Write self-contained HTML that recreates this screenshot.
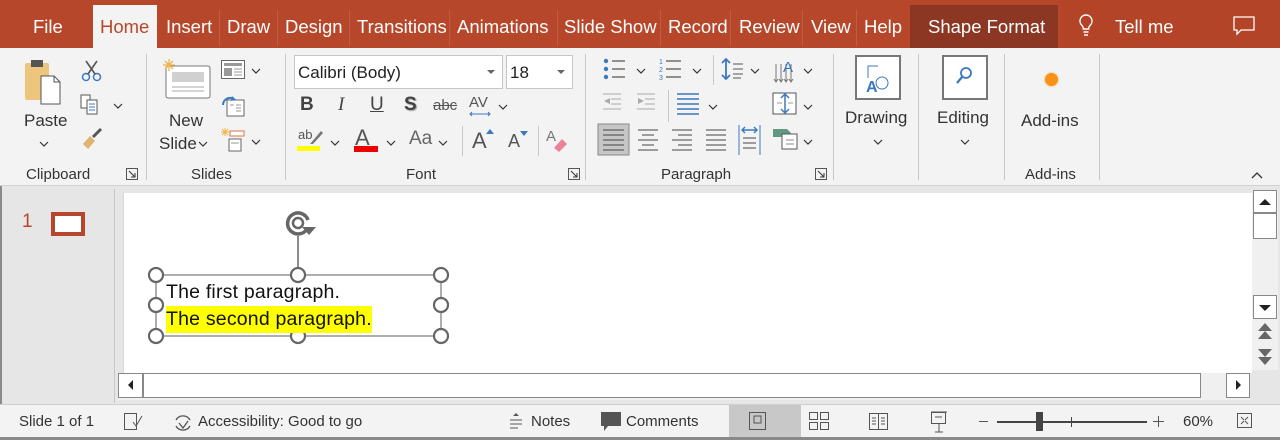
<!DOCTYPE html>
<html><head><meta charset="utf-8"><style>
*{margin:0;padding:0;box-sizing:border-box}
body{width:1280px;height:440px;overflow:hidden;font-family:"Liberation Sans",sans-serif;background:#e6e6e6;position:relative;color:#262626}
.a{position:absolute}
.tab{position:absolute;top:16px;color:#fff;font-size:18.5px;white-space:nowrap}
.sep{position:absolute;top:10px;width:1px;height:36px;background:rgba(255,255,255,.12)}
.lbl{position:absolute;font-size:15px;color:#333;white-space:nowrap}
.st{position:absolute;top:413px;font-size:15px;color:#333;white-space:nowrap}
.vs{position:absolute;width:1px;background:#c8c8c8}
svg{position:absolute;overflow:visible}
</style></head><body>
<!-- title/tab bar -->
<div class="a" style="left:0;top:0;width:1280px;height:48px;background:#b7472a"></div>
<div class="a" style="left:1060px;top:0;width:220px;height:48px;background:#b04228;opacity:.6"></div>
<div class="a" style="left:910px;top:5px;width:148px;height:43px;background:#8c3723"></div>
<div class="a" style="left:93px;top:5px;width:64px;height:43px;background:#f3f3f3"></div>
<div class="tab" style="left:33px">File</div>
<div class="tab" style="left:100px;color:#b7472a">Home</div>
<div class="tab" style="left:166px">Insert</div>
<div class="tab" style="left:227px">Draw</div>
<div class="tab" style="left:285px">Design</div>
<div class="tab" style="left:357px">Transitions</div>
<div class="tab" style="left:457px">Animations</div>
<div class="tab" style="left:564px">Slide Show</div>
<div class="tab" style="left:668px">Record</div>
<div class="tab" style="left:739px">Review</div>
<div class="tab" style="left:811px">View</div>
<div class="tab" style="left:864px">Help</div>
<div class="tab" style="left:928px">Shape Format</div>
<div class="tab" style="left:1115px">Tell me</div>
<div class="sep" style="left:219px"></div><div class="sep" style="left:277px"></div><div class="sep" style="left:349px"></div><div class="sep" style="left:449px"></div><div class="sep" style="left:557px"></div><div class="sep" style="left:660px"></div><div class="sep" style="left:730px"></div><div class="sep" style="left:802px"></div><div class="sep" style="left:856px"></div>
<svg style="left:1078px;top:14px" width="16" height="24"><path d="M8 1a6 6 0 0 0-4 10.5c1 1 1.3 2 1.3 3.5h5.4c0-1.5.3-2.5 1.3-3.5A6 6 0 0 0 8 1zM5.5 18h5M6 21h4" fill="none" stroke="#fff" stroke-width="1.4"/></svg>
<svg style="left:1233px;top:16px" width="22" height="20"><path d="M1 1h20v13H8l-4 4v-4H1z" fill="none" stroke="#fff" stroke-width="1.3"/></svg>

<!-- ribbon -->
<div class="a" style="left:0;top:48px;width:1280px;height:138px;background:#f3f3f3;border-bottom:1px solid #d2d2d2"></div>
<!-- clipboard -->
<svg style="left:23px;top:58px" width="48" height="48"><rect x="2" y="5" width="24" height="37" rx="2" fill="#edc57c"/><rect x="8" y="2" width="12" height="7" fill="#555"/><path d="M18 18h13l6 6v22H18z" fill="#fff" stroke="#555"/><path d="M31 18v6h6" fill="none" stroke="#555"/></svg>
<div class="lbl" style="left:24px;top:111px;font-size:17px">Paste</div>
<svg style="left:39px;top:141px" width="10" height="6"><path d="M1 1l4 4 4-4" fill="none" stroke="#333" stroke-width="1.2"/></svg>
<svg style="left:80px;top:59px" width="24" height="24"><circle cx="6" cy="18" r="3.5" fill="none" stroke="#3b78c0" stroke-width="1.5"/><circle cx="17" cy="18" r="3.5" fill="none" stroke="#3b78c0" stroke-width="1.5"/><path d="M8 15L17 2M15 15L6 2" stroke="#555" stroke-width="1.6"/></svg>
<svg style="left:80px;top:94px" width="24" height="22"><path d="M1 1h9v13H1z" fill="#fff" stroke="#555"/><path d="M7 6h10v14H7z" fill="#fff" stroke="#555"/><path d="M9 10h6M9 13h6M9 16h6" stroke="#3b78c0"/></svg>
<svg style="left:113px;top:103px" width="10" height="6"><path d="M1 1l4 4 4-4" fill="none" stroke="#333" stroke-width="1.2"/></svg>
<svg style="left:81px;top:128px" width="22" height="22"><path d="M12 9l8-8" stroke="#555" stroke-width="3"/><path d="M2 16l7-8 5 5-7 8z" fill="#e0b46c"/></svg>
<div class="lbl" style="left:26px;top:166px">Clipboard</div>
<svg style="left:126px;top:168px" width="12" height="12"><rect x=".5" y=".5" width="11" height="11" fill="none" stroke="#555"/><path d="M3 3l6 6M5 9h4V5" fill="none" stroke="#333"/></svg>
<div class="vs" style="left:146px;top:54px;height:126px"></div>
<!-- slides -->
<svg style="left:162px;top:58px" width="50" height="42"><rect x="4" y="8" width="44" height="32" rx="2" fill="#fff" stroke="#777"/><rect x="10" y="14" width="32" height="10" fill="#d0d0d0"/><path d="M10 29h32M10 33h32" stroke="#aaa"/><path d="M7 1v12M1 7h12M3 3l8 8M11 3l-8 8" stroke="#f0b44a" stroke-width="1.3"/></svg>
<div class="lbl" style="left:169px;top:111px;font-size:17px">New</div>
<div class="lbl" style="left:159px;top:134px;font-size:17px">Slide</div>
<svg style="left:198px;top:141px" width="10" height="6"><path d="M1 1l4 4 4-4" fill="none" stroke="#333" stroke-width="1.2"/></svg>
<svg style="left:221px;top:60px" width="24" height="20"><rect x=".5" y=".5" width="23" height="18" fill="#fff" stroke="#666"/><rect x="3" y="3" width="18" height="3" fill="#999"/><rect x="3" y="8" width="8" height="8" fill="#999"/><path d="M13 9h8M13 12h8M13 15h8" stroke="#999"/></svg>
<svg style="left:251px;top:68px" width="10" height="6"><path d="M1 1l4 4 4-4" fill="none" stroke="#333" stroke-width="1.2"/></svg>
<svg style="left:221px;top:95px" width="24" height="22"><rect x="6" y="5" width="17" height="16" fill="#fff" stroke="#666"/><path d="M9 10h4M15 10h5M15 13h5M15 16h5" stroke="#999"/><path d="M2 10a7 7 0 0 1 12-5" fill="none" stroke="#3b78c0" stroke-width="2"/><path d="M11 1l4 4-5 1z" fill="#3b78c0"/></svg>
<svg style="left:221px;top:127px" width="24" height="26"><path d="M4 1v8M0 5h8M1 2l6 6M7 2L1 8" stroke="#f0b44a"/><rect x="9" y="4" width="14" height="5" fill="#fff" stroke="#e07040"/><rect x="8" y="12" width="12" height="12" fill="#fff" stroke="#666"/><path d="M10 16h8" stroke="#999"/></svg>
<svg style="left:251px;top:139px" width="10" height="6"><path d="M1 1l4 4 4-4" fill="none" stroke="#333" stroke-width="1.2"/></svg>
<div class="lbl" style="left:191px;top:166px">Slides</div>
<div class="vs" style="left:285px;top:54px;height:126px"></div>
<!-- font -->
<div class="a" style="left:294px;top:55px;width:209px;height:34px;background:#fff;border:1px solid #c6c6c6;font-size:17px;padding:7px 3px;color:#222">Calibri (Body)</div>
<svg style="left:487px;top:70px" width="8" height="4"><path d="M0 0h8L4 4z" fill="#666"/></svg>
<div class="a" style="left:506px;top:55px;width:67px;height:34px;background:#fff;border:1px solid #c6c6c6;font-size:17px;padding:7px 3px;color:#222">18</div>
<svg style="left:557px;top:70px" width="8" height="4"><path d="M0 0h8L4 4z" fill="#666"/></svg>
<div class="a" style="left:300px;top:94px;font-size:19px;font-weight:bold;color:#444">B</div>
<div class="a" style="left:338px;top:94px;font-size:19px;font-style:italic;font-family:'Liberation Serif',serif;color:#444">I</div>
<div class="a" style="left:370px;top:94px;font-size:19px;text-decoration:underline;color:#444">U</div>
<div class="a" style="left:404px;top:94px;font-size:19px;font-weight:bold;color:#444;text-shadow:1px 1px 1px #999">S</div>
<div class="a" style="left:433px;top:97px;font-size:15px;color:#555;text-decoration:line-through">abc</div>
<div class="a" style="left:469px;top:94px;font-size:15px;color:#555">AV</div>
<svg style="left:469px;top:111px" width="24" height="6"><path d="M1 3h20M3 1L1 3l2 2M19 1l2 2-2 2" fill="none" stroke="#3b78c0"/></svg>
<svg style="left:498px;top:104px" width="10" height="6"><path d="M1 1l4 4 4-4" fill="none" stroke="#333" stroke-width="1.2"/></svg>
<div class="a" style="left:298px;top:127px;font-size:13px;color:#555">ab</div>
<svg style="left:306px;top:128px" width="18" height="18"><path d="M4 16L15 3l2 2L7 16z" fill="#777"/></svg>
<div class="a" style="left:297px;top:146px;width:23px;height:5px;background:#ffff00"></div>
<svg style="left:330px;top:140px" width="10" height="6"><path d="M1 1l4 4 4-4" fill="none" stroke="#333" stroke-width="1.2"/></svg>
<div class="a" style="left:355px;top:125px;font-size:22px;color:#555">A</div>
<div class="a" style="left:354px;top:146px;width:24px;height:6px;background:#ee0000"></div>
<svg style="left:386px;top:140px" width="10" height="6"><path d="M1 1l4 4 4-4" fill="none" stroke="#333" stroke-width="1.2"/></svg>
<div class="a" style="left:409px;top:128px;font-size:19px;color:#666">Aa</div>
<svg style="left:438px;top:140px" width="10" height="6"><path d="M1 1l4 4 4-4" fill="none" stroke="#333" stroke-width="1.2"/></svg>
<div class="vs" style="left:462px;top:126px;height:30px"></div>
<div class="a" style="left:472px;top:128px;font-size:22px;color:#555">A</div>
<svg style="left:486px;top:129px" width="8" height="5"><path d="M0 5L4 0l4 5z" fill="#3b78c0"/></svg>
<div class="a" style="left:508px;top:131px;font-size:18px;color:#555">A</div>
<svg style="left:520px;top:131px" width="8" height="5"><path d="M0 0h8L4 5z" fill="#3b78c0"/></svg>
<div class="vs" style="left:538px;top:126px;height:30px"></div>
<div class="a" style="left:546px;top:128px;font-size:15px;color:#777">A</div>
<svg style="left:552px;top:136px" width="16" height="16"><path d="M2 12l8-9 5 5-8 8z" fill="#e8839a"/></svg>
<div class="lbl" style="left:406px;top:166px">Font</div>
<svg style="left:568px;top:168px" width="12" height="12"><rect x=".5" y=".5" width="11" height="11" fill="none" stroke="#555"/><path d="M3 3l6 6M5 9h4V5" fill="none" stroke="#333"/></svg>
<div class="vs" style="left:585px;top:54px;height:126px"></div>
<!-- paragraph -->
<svg style="left:597px;top:58px" width="260" height="100">
<g fill="#3b78c0"><circle cx="9" cy="3" r="2.2"/><circle cx="9" cy="11" r="2.2"/><circle cx="9" cy="19" r="2.2"/></g>
<path d="M15 3h13M15 11h13M15 19h13" stroke="#555" stroke-width="1.2"/>
<path d="M69 3h15M69 11h15M69 19h15" stroke="#555" stroke-width="1.2"/>
<text x="62" y="6" font-size="7" fill="#3b78c0" font-family="Liberation Sans">1</text><text x="62" y="14" font-size="7" fill="#3b78c0" font-family="Liberation Sans">2</text><text x="62" y="22" font-size="7" fill="#3b78c0" font-family="Liberation Sans">3</text>
<path d="M129 1v20M125 5l4-4 4 4M125 17l4 4 4-4" fill="none" stroke="#3b78c0" stroke-width="1.8"/><path d="M136 6h10M136 11h10M136 16h10M136 20h8" stroke="#555"/>
<path d="M179 6v18M184 6v18M189 6v18M194 6v18" stroke="#777"/><path d="M177 21l2 3 2-3M182 21l2 3 2-3M187 21l2 3 2-3M192 21l2 3 2-3" fill="none" stroke="#777"/><text x="186" y="14" font-size="15" fill="#3b78c0" font-family="Liberation Sans">A</text>
<path d="M6 36h18M14 41h10M14 46h10M6 51h18" stroke="#aaa"/><path d="M13 40l-6 3 6 3z" fill="#aaa"/>
<path d="M40 36h18M48 41h10M48 46h10M40 51h18" stroke="#aaa"/><path d="M41 40l6 3-6 3z" fill="#aaa"/>
<path d="M80 36h22M80 41h22M80 46h22M80 51h22M80 56h22" stroke="#3b78c0" stroke-width="1.4"/>
<rect x="176" y="35" width="23" height="21" fill="#fff" stroke="#555"/><path d="M188 36v19M184 40l4-4 4 4M184 51l4 4 4-4" fill="none" stroke="#3b78c0" stroke-width="1.5"/><path d="M180 45h5M191 45h5" stroke="#999"/>
<rect x="1" y="66" width="31" height="31" fill="#c6c6c6" stroke="#888"/>
<path d="M6 72h21M6 77h21M6 82h21M6 87h21M6 92h21" stroke="#444"/>
<path d="M41 72h20M45 77h12M41 82h20M45 87h12M41 92h20" stroke="#444"/>
<path d="M75 72h20M81 77h14M75 82h20M81 87h14M75 92h20" stroke="#444"/>
<path d="M109 72h20M109 77h20M109 82h20M109 87h20M109 92h20" stroke="#444"/>
<path d="M142 67v30M163 67v30" stroke="#3b78c0"/><path d="M145 72h15M148 69l-3 3 3 3M157 69l3 3-3 3" fill="none" stroke="#3b78c0" stroke-width="1.4"/><path d="M146 80h13M146 85h13M146 90h13" stroke="#444"/>
<path d="M176 71h14l4 4-4 4h-14z" fill="#5e9a82"/><rect x="185" y="76" width="15" height="15" fill="#fff" stroke="#555"/><path d="M189 82h8M189 86h8" stroke="#888"/>
</svg>
<svg style="left:636px;top:68px" width="10" height="6"><path d="M1 1l4 4 4-4" fill="none" stroke="#333" stroke-width="1.2"/></svg>
<svg style="left:692px;top:68px" width="10" height="6"><path d="M1 1l4 4 4-4" fill="none" stroke="#333" stroke-width="1.2"/></svg>
<svg style="left:750px;top:68px" width="10" height="6"><path d="M1 1l4 4 4-4" fill="none" stroke="#333" stroke-width="1.2"/></svg>
<svg style="left:803px;top:68px" width="10" height="6"><path d="M1 1l4 4 4-4" fill="none" stroke="#333" stroke-width="1.2"/></svg>
<svg style="left:708px;top:104px" width="10" height="6"><path d="M1 1l4 4 4-4" fill="none" stroke="#333" stroke-width="1.2"/></svg>
<svg style="left:803px;top:104px" width="10" height="6"><path d="M1 1l4 4 4-4" fill="none" stroke="#333" stroke-width="1.2"/></svg>
<svg style="left:803px;top:139px" width="10" height="6"><path d="M1 1l4 4 4-4" fill="none" stroke="#333" stroke-width="1.2"/></svg>
<div class="vs" style="left:713px;top:55px;height:30px"></div>
<div class="vs" style="left:668px;top:90px;height:32px"></div>
<div class="lbl" style="left:661px;top:166px">Paragraph</div>
<svg style="left:815px;top:168px" width="12" height="12"><rect x=".5" y=".5" width="11" height="11" fill="none" stroke="#555"/><path d="M3 3l6 6M5 9h4V5" fill="none" stroke="#333"/></svg>
<div class="vs" style="left:833px;top:54px;height:126px"></div>
<!-- drawing -->
<div class="a" style="left:855px;top:55px;width:46px;height:45px;background:#fff;border:2px solid #777"></div>
<svg style="left:862px;top:64px" width="32" height="30"><path d="M6 14V2h10" fill="none" stroke="#3b78c0"/><circle cx="20" cy="19" r="6" fill="none" stroke="#3b78c0"/><text x="4" y="28" font-size="16" font-weight="bold" fill="#3b78c0" font-family="Liberation Sans">A</text></svg>
<div class="lbl" style="left:845px;top:108px;font-size:17px">Drawing</div>
<svg style="left:873px;top:139px" width="10" height="6"><path d="M1 1l4 4 4-4" fill="none" stroke="#333" stroke-width="1.2"/></svg>
<div class="vs" style="left:918px;top:54px;height:126px"></div>
<div class="a" style="left:942px;top:55px;width:46px;height:45px;background:#fff;border:2px solid #777"></div>
<svg style="left:955px;top:66px" width="20" height="22"><circle cx="11" cy="7" r="5" fill="none" stroke="#3b78c0" stroke-width="1.8"/><path d="M7 11L2 17" stroke="#3b78c0" stroke-width="2.2"/></svg>
<div class="lbl" style="left:937px;top:108px;font-size:17px">Editing</div>
<svg style="left:960px;top:139px" width="10" height="6"><path d="M1 1l4 4 4-4" fill="none" stroke="#333" stroke-width="1.2"/></svg>
<div class="vs" style="left:1004px;top:54px;height:126px"></div>
<div class="a" style="left:1045px;top:73px;width:13px;height:13px;border-radius:50%;background:#f9921a;box-shadow:0 0 2px #f9b040"></div>
<div class="lbl" style="left:1021px;top:111px;font-size:17px">Add-ins</div>
<div class="lbl" style="left:1025px;top:166px">Add-ins</div>
<div class="vs" style="left:1099px;top:54px;height:126px"></div>
<svg style="left:1251px;top:172px" width="12" height="7"><path d="M1 6l5-5 5 5" fill="none" stroke="#333" stroke-width="1.3"/></svg>

<!-- left border -->
<div class="a" style="left:0;top:186px;width:2px;height:254px;background:#8a8a8a"></div>
<!-- thumbnail -->
<div class="a" style="left:22px;top:211px;font-size:19px;color:#b7472a">1</div>
<div class="a" style="left:51px;top:212px;width:34px;height:24px;border:4px solid #b7472a;background:#fff"></div>
<div class="a" style="left:114px;top:189px;width:1px;height:214px;background:#c8c8c8"></div>
<!-- slide -->
<div class="a" style="left:123px;top:193px;width:1129px;height:180px;background:#fff;border-left:1px solid #d8d8d8"></div>
<svg style="left:150px;top:205px" width="300" height="140">
<path d="M148 31v39" stroke="#666" stroke-width="1.5"/>
<path d="M158 15a10.5 10.5 0 1 0-1 9" fill="none" stroke="#666" stroke-width="3.5"/><circle cx="148" cy="18" r="5" fill="none" stroke="#666" stroke-width="2.5"/>
<path d="M152 22h14l-7 8z" fill="#666"/>
<rect x="6" y="70" width="285" height="61" fill="none" stroke="#777" stroke-width="1.2"/>
<g fill="#fff" stroke="#666" stroke-width="2.2"><circle cx="6" cy="70" r="7"/><circle cx="148" cy="70" r="7"/><circle cx="291" cy="70" r="7"/><circle cx="6" cy="100" r="7"/><circle cx="291" cy="100" r="7"/><circle cx="6" cy="131" r="7"/><circle cx="148" cy="131" r="7"/><circle cx="291" cy="131" r="7"/></g>
</svg>
<div class="a" style="left:166px;top:281px;height:26px;font-size:19.5px;color:#111;white-space:nowrap;letter-spacing:.2px">The first paragraph.</div>
<div class="a" style="left:166px;top:306px;height:27px;font-size:19.5px;color:#111;background:#ffff00;padding:2px 0;line-height:23px;white-space:nowrap;letter-spacing:.2px">The second paragraph.</div>
<!-- vertical scrollbar -->
<div class="a" style="left:1252px;top:190px;width:28px;height:214px;background:#e6e6e6"></div>
<div class="a" style="left:1252px;top:190px;width:26px;height:180px;background:#f0f0f0"></div>
<div class="a" style="left:1253px;top:190px;width:24px;height:23px;background:#fff;border:1px solid #888"></div>
<svg style="left:1259px;top:199px" width="12" height="6"><path d="M0 6L6 0l6 6z" fill="#222"/></svg>
<div class="a" style="left:1253px;top:213px;width:24px;height:26px;background:#fff;border:1px solid #888"></div>
<div class="a" style="left:1253px;top:295px;width:24px;height:24px;background:#fff;border:1px solid #888"></div>
<svg style="left:1259px;top:305px" width="12" height="6"><path d="M0 0h12L6 6z" fill="#222"/></svg>
<svg style="left:1257px;top:323px" width="16" height="46"><path d="M8 0l7 8H1zM8 8l7 8H1z" fill="#666"/><path d="M1 26h14l-7 8zM1 34h14l-7 8z" fill="#666"/></svg>
<!-- horizontal scrollbar -->
<div class="a" style="left:118px;top:373px;width:1132px;height:27px;background:#f0f0f0"></div>
<div class="a" style="left:118px;top:373px;width:25px;height:25px;background:#fff;border:1px solid #888"></div>
<svg style="left:128px;top:380px" width="5" height="10"><path d="M5 0v10L0 5z" fill="#222"/></svg>
<div class="a" style="left:143px;top:373px;width:1058px;height:25px;background:#fff;border:1px solid #888"></div>
<div class="a" style="left:1226px;top:373px;width:24px;height:25px;background:#fff;border:1px solid #888"></div>
<svg style="left:1236px;top:380px" width="5" height="10"><path d="M0 0v10l5-5z" fill="#222"/></svg>
<!-- status bar -->
<div class="a" style="left:0;top:404px;width:1280px;height:36px;background:#f3f3f3;border-top:1px solid #d0d0d0"></div>
<div class="a" style="left:0;top:437px;width:1280px;height:3px;background:#8a8a8a"></div>
<div class="a" style="left:729px;top:405px;width:72px;height:32px;background:#c8c8c8"></div>
<div class="st" style="left:19px">Slide 1 of 1</div>
<svg style="left:124px;top:413px" width="20" height="18"><rect x=".5" y=".5" width="12" height="16" fill="none" stroke="#555"/><path d="M9 9l3 4 6-10" fill="none" stroke="#555"/></svg>
<svg style="left:172px;top:412px" width="22" height="22"><path d="M4 8a8 8 0 0 1 14 0M18 14a8 8 0 0 1-14 0" fill="none" stroke="#555" stroke-width="1.3"/><path d="M7 11l4 5 5-7" fill="none" stroke="#555" stroke-width="1.3"/></svg>
<div class="st" style="left:198px">Accessibility: Good to go</div>
<svg style="left:508px;top:413px" width="16" height="16"><path d="M5 3l3-3 3 3z" fill="#555"/><path d="M2 7h12M2 11h12M2 15h8" stroke="#555"/></svg>
<div class="st" style="left:531px">Notes</div>
<svg style="left:600px;top:411px" width="22" height="22"><path d="M1 1h20v14H8l-4 5v-5H1z" fill="#555"/></svg>
<div class="st" style="left:626px">Comments</div>
<svg style="left:749px;top:412px" width="18" height="18"><rect x=".5" y=".5" width="16" height="17" fill="none" stroke="#555"/><rect x="5" y="4" width="7" height="7" fill="none" stroke="#555"/></svg>
<svg style="left:809px;top:412px" width="20" height="18"><rect x=".5" y=".5" width="8" height="7" fill="none" stroke="#555"/><rect x="11.5" y=".5" width="8" height="7" fill="none" stroke="#555"/><rect x=".5" y="10.5" width="8" height="7" fill="none" stroke="#555"/><rect x="11.5" y="10.5" width="8" height="7" fill="none" stroke="#555"/></svg>
<svg style="left:869px;top:412px" width="20" height="18"><path d="M.5 1.5h9v16h-9zM9.5 1.5h9v16h-9z" fill="none" stroke="#555"/><path d="M3 6h4M3 9h4M3 12h4M12 6h4M12 9h4M12 12h4" stroke="#555"/></svg>
<svg style="left:930px;top:411px" width="18" height="22"><rect x="1.5" y="1.5" width="14" height="11" fill="none" stroke="#555"/><path d="M1 1h16M9 13v8M5 21h8M5 6h7" stroke="#555"/></svg>
<div class="a" style="left:979px;top:421px;width:9px;height:1px;background:#555"></div>
<div class="a" style="left:997px;top:421px;width:150px;height:2px;background:#444"></div>
<div class="a" style="left:1036px;top:412px;width:7px;height:19px;background:#444"></div>
<div class="a" style="left:1071px;top:417px;width:1px;height:10px;background:#444"></div>
<div class="a" style="left:1153px;top:421px;width:11px;height:1px;background:#555"></div><div class="a" style="left:1158px;top:416px;width:1px;height:11px;background:#555"></div>
<div class="st" style="left:1183px">60%</div>
<svg style="left:1237px;top:413px" width="16" height="16"><rect x=".5" y=".5" width="14" height="14" fill="none" stroke="#555"/><path d="M4 4l3 3M11 4L8 7M4 11l3-3M11 11L8 8" stroke="#555"/></svg>
</body></html>
